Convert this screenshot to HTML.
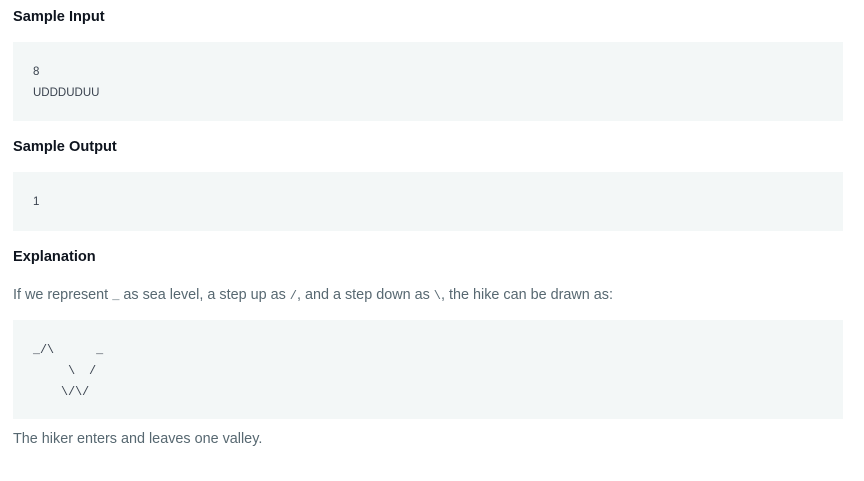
<!DOCTYPE html>
<html><head><meta charset="utf-8"><style>
body{margin:0;background:#fff;width:864px;height:481px;overflow:hidden;font-family:"Liberation Sans",sans-serif;}
.h{position:absolute;left:13px;font-weight:bold;font-size:14.6px;color:#0e141e;line-height:16px;}
.code{position:absolute;left:13px;width:830px;background:#f3f7f7;}
.code pre{margin:0;position:absolute;left:20px;font-family:"Liberation Sans",sans-serif;font-size:11.5px;line-height:21px;color:#39424e;}
.p{position:absolute;left:13px;font-size:14.4px;color:#576871;line-height:16px;}
.m{font-family:"Liberation Mono",monospace;font-size:12px;}
</style></head><body>
<div class="h" style="top:9px">Sample Input</div>
<div class="code" style="top:42px;height:79px"><pre style="top:20px">8
UDDDUDUU</pre></div>
<div class="h" style="top:139px">Sample Output</div>
<div class="code" style="top:172px;height:59px"><pre style="top:20px">1</pre></div>
<div class="h" style="top:249px">Explanation</div>
<div class="p" style="top:287px">If we represent <span class="m">_</span> as sea level, a step up as <span class="m">/</span>, and a step down as <span class="m">\</span>, the hike can be drawn as:</div>
<div class="code" style="top:320px;height:99px"><pre style="top:20px;font-family:'Liberation Mono',monospace;font-size:11.7px">_/\      _
     \  /
    \/\/</pre></div>
<div class="p" style="top:431px">The hiker enters and leaves one valley.</div>
</body></html>
